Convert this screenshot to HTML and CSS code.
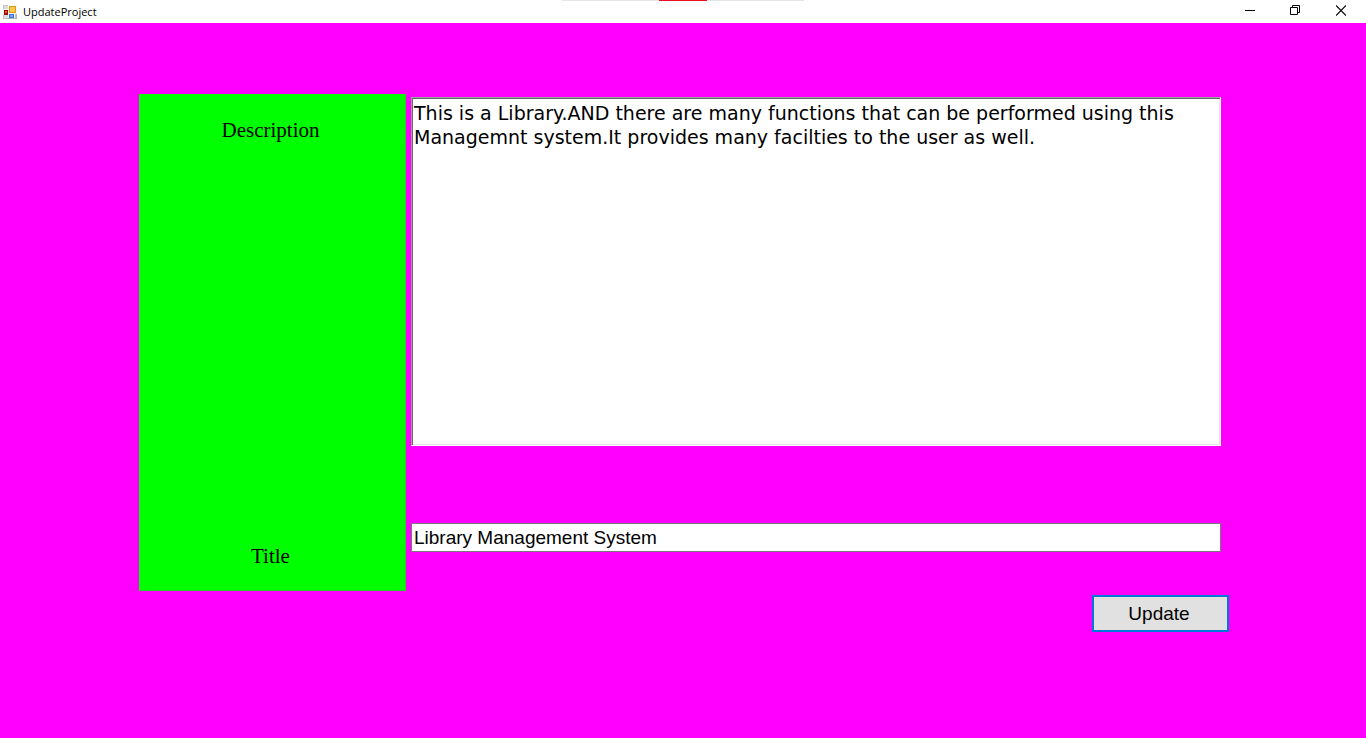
FILE: index.html
```html
<!DOCTYPE html>
<html lang="en">
<head>
<meta charset="utf-8">
<title>UpdateProject</title>
<link rel="stylesheet" href="styles.css">
</head>
<body>
<div class="window">
  <header class="titlebar">
    <div class="strip"><span class="strip-mark"></span></div>
    <svg class="app-icon" width="14" height="14" viewBox="0 0 14 14" shape-rendering="crispEdges" aria-hidden="true">
      <rect width="14" height="14" fill="#c4c4c4"/>
      <rect x="1" y="1" width="4" height="3" fill="#dedede"/>
      <rect x="1" y="10" width="4" height="3" fill="#dedede"/>
      <rect x="0" y="4" width="6" height="6" fill="#f4f4f4"/>
      <rect x="1" y="5" width="4" height="5" fill="#a80c08"/>
      <rect x="2" y="6" width="2" height="2" fill="#e8503c"/>
      <rect x="5" y="0" width="9" height="9" fill="#f8f8f8"/>
      <rect x="6" y="1" width="7" height="7" fill="#d99a16"/>
      <rect x="7" y="2" width="5" height="5" fill="#fcc94c"/>
      <rect x="5" y="9" width="7" height="5" fill="#f0f4fa"/>
      <rect x="6" y="9" width="5" height="4" fill="#3a72d8"/>
      <rect x="7" y="10" width="3" height="2" fill="#7aa8f4"/>
      <path d="M13 9V13.500H5" fill="none" stroke="#b4b4b4"/>
    </svg>
    <h1 class="caption">UpdateProject</h1>
    <div class="window-buttons">
      <button class="window-button" type="button" aria-label="Minimize">
        <svg width="11" height="11" viewBox="0 0 11 11"><path d="M1 5.5H11" fill="none" stroke="#000"/></svg>
      </button>
      <button class="window-button" type="button" aria-label="Restore">
        <svg width="10" height="11" viewBox="0 0 10 11"><path d="M.5 2.5H7.500V9.500H.5ZM2.500 2.500V.5H9.500V7.500H7.500" fill="none" stroke="#000"/></svg>
      </button>
      <button class="window-button" type="button" aria-label="Close">
        <svg width="10" height="11" viewBox="0 0 10 11"><path d="M0 .5L10 10.500M10 .5L0 10.500" fill="none" stroke="#000" stroke-width="1.200"/></svg>
      </button>
    </div>
  </header>
  <main class="client">
    <form class="form">
      <div class="labels">
        <label for="description">Description</label>
        <label for="title">Title</label>
      </div>
      <div class="fields">
        <textarea class="description" id="description" spellcheck="false">This is a Library.AND there are many functions that can be performed using this Managemnt system.It provides many facilties to the user as well.</textarea>
        <input class="title" id="title" type="text" value="Library Management System" spellcheck="false">
      </div>
      <button class="update" type="button">Update</button>
    </form>
  </main>
</div>
</body>
</html>
```

FILE: styles.css
```css
* {
  box-sizing: border-box;
}

body {
  margin: 0;
  color: #000;
  font-family: "Liberation Sans", Arial, sans-serif;
}

.window {
  display: flex;
  flex-direction: column;
  min-height: 100vh;
  background: #f0f;
}

.titlebar {
  position: relative;
  display: flex;
  align-items: center;
  height: 23px;
  padding: 0 2px 0 3px;
  background: #fff;
}

.strip {
  position: absolute;
  top: 0;
  left: 50%;
  display: flex;
  justify-content: center;
  width: 242px;
  height: 1px;
  background: #e5e5e5;
  transform: translateX(-50%);
}

.strip-mark {
  width: 48px;
  background: #e81123;
}

.app-icon {
  flex: none;
}

.caption {
  flex: 1;
  margin: 0 0 0 6px;
  font: 11px/23px "Open Sans", "Segoe UI", sans-serif;
}

.window-buttons {
  display: flex;
}

.window-button {
  display: flex;
  align-items: center;
  justify-content: center;
  width: 46px;
  height: 23px;
  padding: 0 0 2px;
  border: 0;
  background: none;
}

.client {
  flex: 1;
  padding: 71px 137px 32px 139px;
}

.form {
  display: grid;
  grid-template-columns: 267px 1fr;
  column-gap: 5px;
  row-gap: 4px;
}

.labels {
  display: flex;
  flex-direction: column;
  align-items: center;
  justify-content: space-between;
  padding: 24px 3px 22px 0;
  border-right: 1px solid #2fc62f;
  border-bottom: 1px solid #2fc62f;
  background: #0f0;
  font: 21px/24px "Liberation Serif", Georgia, serif;
}

.fields {
  display: flex;
  flex-direction: column;
  gap: 77px;
  padding: 3px 8px 39px 0;
}

.description {
  display: block;
  width: 100%;
  height: 349px;
  padding: 3px 2px;
  border: 1px solid;
  border-color: #a0a0a0 #fff #fff #a0a0a0;
  outline: 0;
  background: #fff;
  box-shadow: inset 1px 1px #696969, inset -1px -1px #e3e3e3;
  font: 19px/24px "DejaVu Sans", Verdana, sans-serif;
  resize: none;
}

.title {
  width: 100%;
  height: 29px;
  padding: 0 2px;
  border: 1px solid #7a7a7a;
  outline: 0;
  background: #fff;
  font: 19px/27px "Liberation Sans", Arial, sans-serif;
}

.update {
  grid-column: 2;
  justify-self: end;
  width: 137px;
  height: 37px;
  padding: 0 3px 0 0;
  border: 2px solid #0078d7;
  background: #e1e1e1;
  color: #000;
  font: 19px/24px "Liberation Sans", Arial, sans-serif;
}
```
